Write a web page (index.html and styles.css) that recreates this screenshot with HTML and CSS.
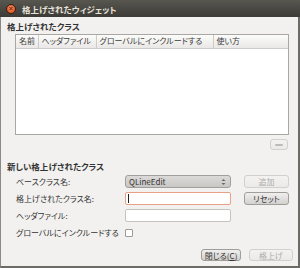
FILE: index.html
```html
<!DOCTYPE html>
<html lang="ja">
<head>
  <meta charset="UTF-8" />
  <title>格上げされたウィジェット</title>
  <link rel="stylesheet" href="styles.css">
</head>
<body>
  <div class="window">
    <div class="titlebar">
      <span class="close-btn">
        <svg width="9" height="9" viewBox="0 0 9 9"><path d="M3 3L6 6M6 3L3 6" stroke="#5a2a14" stroke-width="1.1" stroke-linecap="round"/></svg>
      </span>
      <span class="title">格上げされたウィジェット</span>
    </div>

    <div class="content">
      <h2 class="group-title">格上げされたクラス</h2>
      <div class="class-list">
        <table>
          <thead>
            <tr>
              <th class="col-name">名前</th>
              <th class="col-header">ヘッダファイル</th>
              <th class="col-global">グローバルにインクルードする</th>
              <th class="col-usage">使い方</th>
            </tr>
          </thead>
          <tbody></tbody>
        </table>
      </div>
      <div class="list-actions">
        <button class="btn btn-minus" disabled><span class="minus-bar"></span></button>
      </div>

      <h2 class="group-title second">新しい格上げされたクラス</h2>
      <div class="new-class">
        <label class="field-label">ベースクラス名:</label>
        <div class="combo">
          <span>QLineEdit</span>
          <svg width="5" height="8" viewBox="0 0 5 8"><path d="M0.5 3L2.5 1L4.5 3Z M0.5 5L2.5 7L4.5 5Z" fill="#6a6865"/></svg>
        </div>
        <button class="btn" disabled>追加</button>

        <label class="field-label">格上げされたクラス名:</label>
        <div class="text-input focused"><span class="caret"></span></div>
        <button class="btn">リセット</button>

        <label class="field-label">ヘッダファイル:</label>
        <div class="text-input"></div>
        <span></span>

        <label class="field-label">グローバルにインクルードする</label>
        <div class="check-cell"><span class="checkbox"></span></div>
        <span></span>
      </div>

      <div class="dialog-buttons">
        <button class="btn btn-close">閉じる(<u>C</u>)</button>
        <button class="btn btn-promote" disabled>格上げ</button>
      </div>
    </div>
  </div>
</body>
</html>
```

FILE: styles.css
```css
/* Reset */
* {
  margin: 0; padding: 0; box-sizing: border-box;
  font-family: "Noto Sans CJK JP", "DejaVu Sans", sans-serif;
  font-feature-settings: "palt";
}

body {
  width: 300px;
  height: 268px;
  background: #f2f1f0;
  overflow: hidden;
}

.window {
  width: 300px;
  height: 268px;
  display: flex;
  flex-direction: column;
  border-left: 1px solid #8a8985;
  border-right: 2px solid #6c6b68;
  border-bottom: 2px solid #6c6b68;
  background: #f2f1f0;
  color: #333;
  font-size: 8px;
}

/* Title bar */
.titlebar {
  height: 17px;
  margin-left: -1px;
  margin-right: -2px;
  display: flex;
  align-items: center;
  background: linear-gradient(#57564f, #3c3b37);
  padding-left: 6px;
}
.close-btn {
  width: 10px;
  height: 10px;
  border-radius: 50%;
  background: radial-gradient(circle at 50% 35%, #f5845a, #df4b16);
  border: 1px solid #3a2010;
  display: flex;
  align-items: center;
  justify-content: center;
}
.close-btn svg {
  display: block;
}
.title {
  margin-left: 6px;
  color: #e6e2da;
  font-size: 8.5px;
  font-weight: 700;
  line-height: 12px;
}

/* Content */
.content {
  flex: 1;
  display: flex;
  flex-direction: column;
}
.group-title {
  font-size: 8.5px;
  font-weight: 700;
  line-height: 12px;
  margin: 3px 0 0 6px;
  color: #333;
}
.group-title.second {
  margin-top: 10px;
}

/* List */
.class-list {
  margin: 2px 0 0 14px;
  width: 274px;
  height: 101px;
  background: #fff;
  border: 1px solid #a9a7a4;
}
table {
  width: 100%;
  border-collapse: collapse;
  table-layout: fixed;
}
th {
  height: 13px;
  padding: 0 0 0 3px;
  font-weight: 400;
  font-size: 8px;
  line-height: 12px;
  text-align: left;
  color: #3c3c3a;
  background: linear-gradient(#fbfbfa, #e9e8e6);
  border-bottom: 1px solid #cdcbc8;
  border-right: 1px solid #cdcbc8;
  white-space: nowrap;
  overflow: hidden;
}
th:last-child {
  border-right: none;
}
.col-name { width: 22px; }
.col-header { width: 58px; }
.col-global { width: 117px; }

.list-actions {
  display: flex;
  justify-content: flex-end;
  margin: 4px 10px 0 0;
}

/* Buttons */
.btn {
  height: 13px;
  border: 1px solid #9f9d99;
  border-radius: 3px;
  background: linear-gradient(#f0efee, #d3d1ce);
  color: #333;
  font-size: 8px;
  line-height: 11px;
  display: flex;
  align-items: center;
  justify-content: center;
}
.btn:disabled {
  border-color: #d2d0cd;
  background: linear-gradient(#f3f2f1, #ebeae8);
  color: #aeaca9;
}
.btn-minus {
  width: 18px;
  height: 11px;
}
.minus-bar {
  width: 8px;
  height: 2px;
  background: #bdbbb8;
  border-radius: 1px;
}

/* New class form */
.new-class {
  margin: 3px 0 0 15px;
  display: grid;
  grid-template-columns: 96px 106px 45px;
  grid-template-rows: 13px 13px 13px 13px;
  column-gap: 13px;
  row-gap: 4px;
  align-items: center;
}
.field-label {
  font-size: 8px;
  line-height: 12px;
  color: #333;
  white-space: nowrap;
}
.combo {
  height: 13px;
  border: 1px solid #a19f9b;
  border-radius: 3px;
  background: linear-gradient(#dcdad8, #c9c7c4);
  display: flex;
  align-items: center;
  justify-content: space-between;
  padding: 0 4px 0 3px;
  font-size: 8px;
  color: #333;
}
.combo svg {
  display: block;
}
.text-input {
  height: 13px;
  border: 1px solid #c5c3c0;
  border-radius: 2px;
  background: #fff;
  display: flex;
  align-items: center;
  padding-left: 2px;
}
.text-input.focused {
  border-color: #e9a184;
}
.caret {
  width: 1px;
  height: 9px;
  background: #222;
}
.check-cell {
  display: flex;
  align-items: center;
}
.checkbox {
  width: 8px;
  height: 8px;
  border: 1px solid #9c9a96;
  border-radius: 1px;
  background: #fff;
}

/* Dialog buttons */
.dialog-buttons {
  display: flex;
  justify-content: flex-end;
  gap: 8px;
  margin: 10px 5px 0 0;
}
.btn-close {
  width: 40px;
  height: 12px;
}
.btn-close u {
  text-underline-offset: 1px;
}
.btn-promote {
  width: 44px;
  height: 12px;
}
```
